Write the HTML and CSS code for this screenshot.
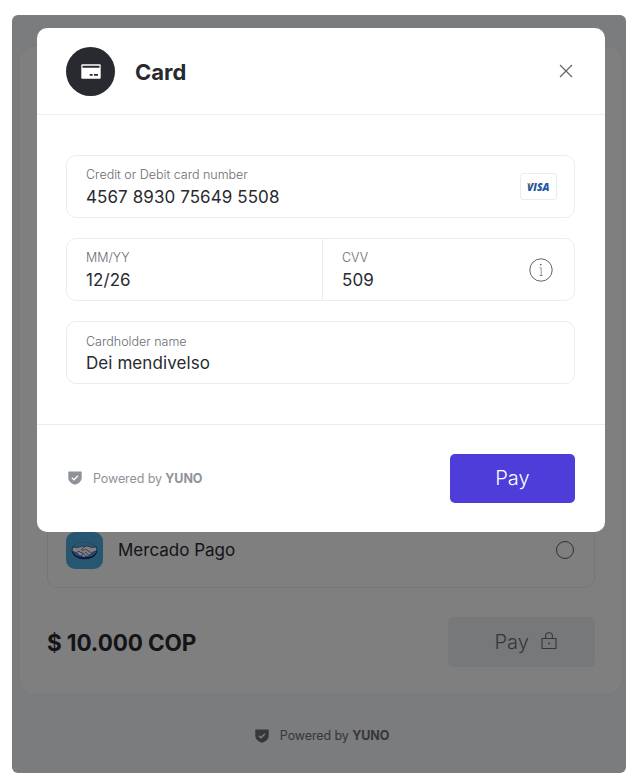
FILE: index.html
```html
<!DOCTYPE html>
<html lang="en">
<head>
<meta charset="utf-8">
<title>Checkout</title>
<link rel="stylesheet" href="styles.css">
</head>
<body>
<div class="stage">
  <main class="checkout">
    <div class="method">
      <svg class="method-logo" viewBox="0 0 37 37">
        <rect width="37" height="37" rx="9" fill="#4faee0"/>
        <ellipse cx="18.5" cy="18.6" rx="12.7" ry="8.7" fill="#1a237e"/>
        <ellipse cx="18.5" cy="17.8" rx="12" ry="7.7" fill="#4faee0"/>
        <path d="M6.6 14.8c3 1.2 5.700.9 8.200-.3 1.500-.6 2.600-.2 3.700.3 1.500-.9 3-.9 4.600-.2 2.400 1.100 4.900 1.200 7.300.2l.5 4-3.900 1.200-1.300 2-2.100.9-1.600 1.300-2 .3-2.400.8-2.400-1.200-2.600-1-1.600-2-4.900-2z" fill="#fff" stroke="#1a237e" stroke-width=".6"/>
        <path d="M18.500 14.800l-3.300 2.800c1.500 1.300 3.200.5 4.500-.4l6.800 4.500M19 20l3.800 3.200M17 21.500l2.500 2.400M11 20.200l2-1.200 1.300 1.300 1.700.1.800 1.500-1.300 1.900" fill="none" stroke="#1a237e" stroke-width=".6"/>
      </svg>
      <span class="method-name">Mercado Pago</span>
      <span class="radio"></span>
    </div>
    <div class="summary">
      <strong class="total">$ 10.000 COP</strong>
      <button class="pay-locked" disabled>
        <span>Pay</span>
        <svg class="lock" viewBox="0 0 16 18"><path d="M1 6.500h14v10H1zM4.600 6.500V4.200a3.400 3.400 0 0 1 6.800 0v2.300" fill="none" stroke="currentColor" stroke-width="1.100" stroke-linejoin="round"/><circle cx="8" cy="11.500" r=".9" fill="currentColor"/></svg>
      </button>
    </div>
  </main>
  <footer class="powered page-powered">
    <svg class="shield" viewBox="0 0 14 14"><path d="M.3 1.200Q.3.500 1 .500h12q.7 0 .7.700v5.500c0 3.700-3.200 5.900-6.700 7.100C3.500 12.600.3 10.400.3 6.700z" fill="currentColor"/><path class="tick" d="M3.800 6.700l2.200 2.100 4-4"/></svg>
    <span>Powered by <b>YUNO</b></span>
  </footer>
  <div class="overlay">
    <section class="modal">
      <header class="modal-head">
        <span class="badge"><svg class="card-icon" viewBox="0 0 20 15"><rect x=".3" y=".3" width="19.400" height="14.400" rx="1" fill="#fff"/><path d="M1.500 2.800h17" stroke="#282a30" stroke-width="2"/><path d="M8.700 10.900H11.600M13 10.900h4" stroke="#282a30" stroke-width="1.600"/></svg></span>
        <h1>Card</h1>
        <svg class="close" viewBox="0 0 14 14"><path d="M1 1l12 12M13 1L1 13" stroke="#606268" stroke-width="1.200"/></svg>
      </header>
      <div class="fields">
        <div class="field">
          <div class="cell">
            <div><label>Credit or Debit card number</label><p>4567 8930 75649 5508</p></div>
            <span class="brand"><svg class="visa" viewBox="0 0 27 14"><text x="2" y="10.800" textLength="22.500" lengthAdjust="spacingAndGlyphs">VISA</text><path d="M1.900 3.100h2.500q1 .1 1.200 1.300l.4 2.200Q4.900 4.200 1.900 3.300z" fill="#f0a32c"/></svg></span>
          </div>
        </div>
        <div class="field">
          <div class="cell"><div><label>MM/YY</label><p>12/26</p></div></div>
          <div class="cell cvv">
            <div><label>CVV</label><p>509</p></div>
            <svg class="info" viewBox="0 0 24 24"><circle cx="12" cy="12" r="11.200" fill="none" stroke="#63656b"/><path d="M10.500 9.800h1.700v7.600M10.600 17.500h3.200" fill="none" stroke="#77797f" stroke-width=".8"/><circle cx="11.800" cy="6.600" r=".85" fill="#63656b"/></svg>
          </div>
        </div>
        <div class="field">
          <div class="cell"><div><label>Cardholder name</label><p>Dei mendivelso</p></div></div>
        </div>
      </div>
      <footer class="modal-foot">
        <div class="powered">
          <svg class="shield" viewBox="0 0 14 14"><path d="M.3 1.200Q.3.500 1 .500h12q.7 0 .7.700v5.500c0 3.700-3.200 5.900-6.700 7.100C3.500 12.600.3 10.400.3 6.700z" fill="currentColor"/><path class="tick" d="M3.800 6.700l2.200 2.100 4-4"/></svg>
          <span>Powered by <b>YUNO</b></span>
        </div>
        <button class="pay">Pay</button>
      </footer>
    </section>
  </div>
</div>
</body>
</html>
```

FILE: styles.css
```css
* { box-sizing: border-box; }
body { margin: 0; padding: 15px 12px 11px; background: #fff; color: #282a30; font-family: Inter, sans-serif; }
h1, p { margin: 0; }
button { border: 0; font: inherit; }
.stage { position: relative; height: 758px; padding: 30px 3px 0 6px; border-radius: 6px; background: #f6f8fb; overflow: hidden; }
.checkout { display: flex; flex-direction: column; justify-content: flex-end; height: 649.500px; padding: 0 27px 26.500px 28px; border: 1px solid #f0f2f5; border-radius: 18px; background: #fff; }
.method { display: flex; align-items: center; height: 75px; padding: 0 20px 0 18px; border: 1px solid #edeff2; border-top: 0; border-radius: 0 0 10px 10px; }
.method-logo { width: 37px; height: 37px; margin-right: 15px; }
.method-name { flex: 1; font-size: 17px; letter-spacing: 0; }
.radio { width: 18px; height: 18px; border: 1px solid #606268; border-radius: 50%; }
.summary { display: flex; align-items: center; justify-content: space-between; margin-top: 29px; }
.total { font-size: 22.500px; font-weight: 700; letter-spacing: -.1px; }
.pay-locked { display: flex; align-items: center; gap: 12px; width: 147px; height: 50px; padding: 0 0 0 46.500px; border-radius: 5px; background: #edf0f4; color: #6c6e74; font-size: 20px; font-weight: 350; }
.lock { width: 16px; height: 18px; margin-top: -2px; }
.powered { display: flex; align-items: center; gap: 11px; color: #8f9298; font-size: 12.500px; letter-spacing: -.1px; }
.powered b { font-weight: 700; }
.shield { width: 14px; height: 14px; }
.tick { fill: none; stroke: #fff; stroke-width: 1.300; }
.page-powered { justify-content: center; margin-top: 33.500px; padding: 0 0 0 3px; color: #6c6e74; }
.overlay { position: absolute; inset: 0; padding: 12.500px 21px 0 25px; background: rgba(0, 0, 0, .5); }
.modal { height: 504.500px; border-radius: 10px; background: #fff; }
.modal-head { display: flex; align-items: center; height: 87.500px; padding: 1px 32.500px 0 29px; border-bottom: 1px solid #edeff1; }
.badge { display: grid; place-items: center; width: 49px; height: 49px; margin-right: 20px; border-radius: 50%; background: #282a30; }
.card-icon { width: 20px; height: 15px; }
h1 { flex: 1; padding-top: 1px; font-size: 22px; font-weight: 700; }
.close { width: 14px; height: 14px; }
.fields { display: flex; flex-direction: column; gap: 20px; height: 309px; padding: 39.500px 30px 0 29px; }
.field { display: flex; height: 63.300px; border: 1px solid #e8edf2; border-radius: 10px; }
.cell { display: flex; flex: 1; align-items: center; justify-content: space-between; padding: 1.500px 17.500px 0 19px; }
.cvv { flex: none; width: 252px; padding-right: 21px; border-left: 1px solid #e8edf2; }
label { display: block; font-size: 12.500px; font-weight: 300; line-height: 20px; color: #6a6c72; }
p { padding-top: .5px; font-size: 17px; line-height: 23px; letter-spacing: .08px; }
.brand { display: grid; place-items: center; width: 37px; height: 27px; border: 1px solid #e8edf2; border-radius: 3px; }
.visa { width: 27px; height: 14px; }
.visa text { font-family: "Open Sans", sans-serif; font-size: 10.500px; font-style: italic; font-weight: 800; fill: #2057a0; }
.info { width: 24px; height: 24px; }
.modal-foot { display: flex; align-items: center; justify-content: space-between; height: 107px; padding: 0 30px 0 31px; border-top: 1px solid #e9edf1; }
.pay { width: 125px; height: 49px; padding: 0; border-radius: 5px; background: #4e3dd8; color: #fff; font-size: 20px; font-weight: 350; }
```
